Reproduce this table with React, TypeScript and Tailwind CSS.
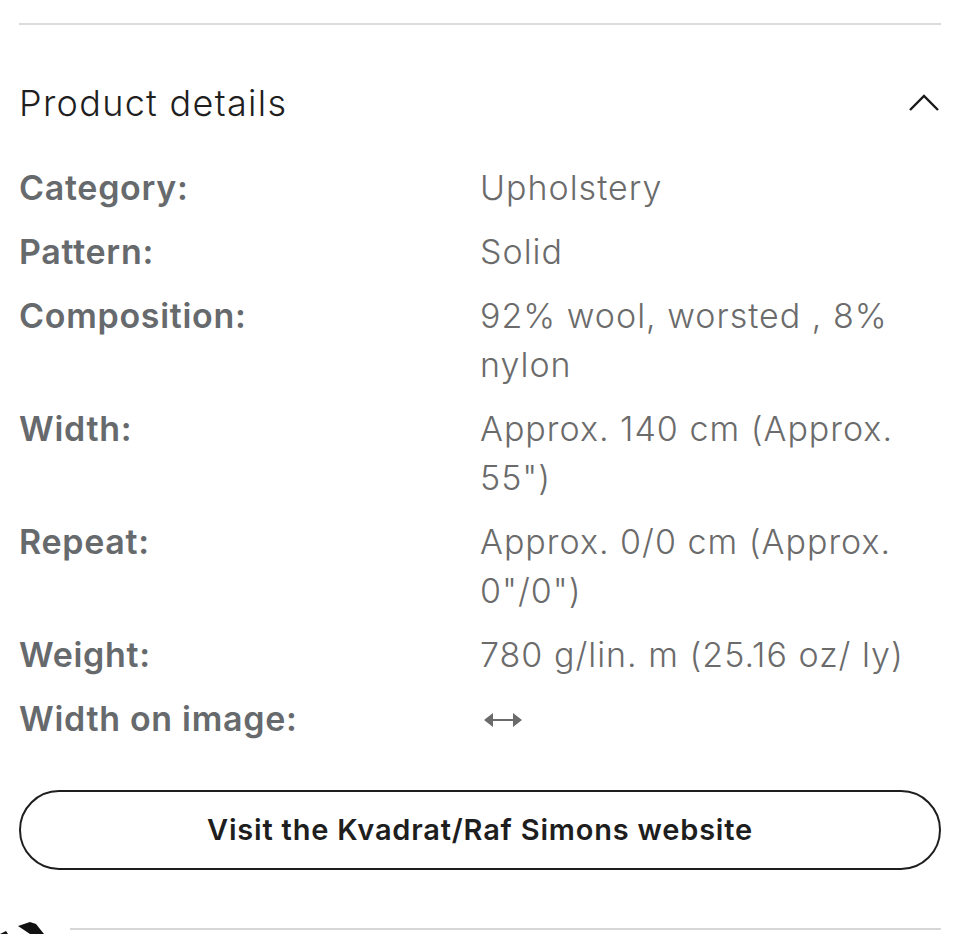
import React from "react";

const rows: { label: string; value: React.ReactNode }[] = [
  { label: "Category:", value: "Upholstery" },
  { label: "Pattern:", value: "Solid" },
  { label: "Composition:", value: "92% wool, worsted , 8% nylon" },
  { label: "Width:", value: 'Approx. 140 cm (Approx. 55")' },
  { label: "Repeat:", value: 'Approx. 0/0 cm (Approx. 0"/0")' },
  { label: "Weight:", value: "780 g/lin. m (25.16 oz/ ly)" },
  {
    label: "Width on image:",
    value: (
      <svg width="42" height="20" viewBox="0 0 42 20" className="inline-block ml-[2px] mb-[4px]">
        <path d="M2 10 L11 3 L11 17 Z M40 10 L31 3 L31 17 Z" fill="#6b6b6b" />
        <path d="M10 10 H32" stroke="#6b6b6b" strokeWidth="2" />
      </svg>
    ),
  },
];

const App = () => {
  return (
    <div
      className="w-[960px] h-[934px] overflow-hidden bg-white relative"
      style={{ fontFamily: "Inter, 'Liberation Sans', sans-serif" }}
    >
      <div className="px-[19px] pt-[23px]">
        {/* top divider */}
        <div className="h-[2px] bg-[#dcdcdc]" />

        {/* header */}
        <div className="flex items-center justify-between mt-[54px]">
          <span className="text-[36px] leading-[48px] font-light tracking-[1.3px] text-[#1f1f1f]">
            Product details
          </span>
          <svg width="32" height="20" viewBox="0 0 32 20" className="mr-[1px]">
            <path d="M2 17 L16 3 L30 17" fill="none" stroke="#1a1a1a" strokeWidth="2.4" />
          </svg>
        </div>

        {/* detail rows */}
        <div className="flex flex-col gap-[15px] mt-[36px]">
          {rows.map((r) => (
            <div key={r.label} className="flex leading-[49px]">
              <span className="w-[461px] shrink-0 text-[34px] font-semibold tracking-[0.7px] text-[#676a6d]">
                {r.label}
              </span>
              <span className="w-[445px] text-[34px] font-light tracking-[1px] text-[#6b6b6b]">{r.value}</span>
            </div>
          ))}
        </div>

        {/* website button */}
        <button className="mt-[47px] w-full h-[80px] rounded-full border-2 border-[#1e1e1e] flex items-center justify-center text-[29px] font-semibold tracking-[0.8px] text-[#1e1e1e]">
          Visit the Kvadrat/Raf Simons website
        </button>

        {/* bottom divider */}
        <div className="flex items-end mt-[58px]">
          <div className="h-[2px] ml-[51px] flex-1 bg-[#d6d6d6]" />
        </div>
      </div>
      <svg width="50" height="14" viewBox="0 0 50 14" className="absolute left-0 bottom-0">
        <path d="M0 14 L6 11 L8 14 Z M18 6 L30 2 L36 4 L44 14 L30 14 Z" fill="#111" />
      </svg>
    </div>
  );
};

export default App;
